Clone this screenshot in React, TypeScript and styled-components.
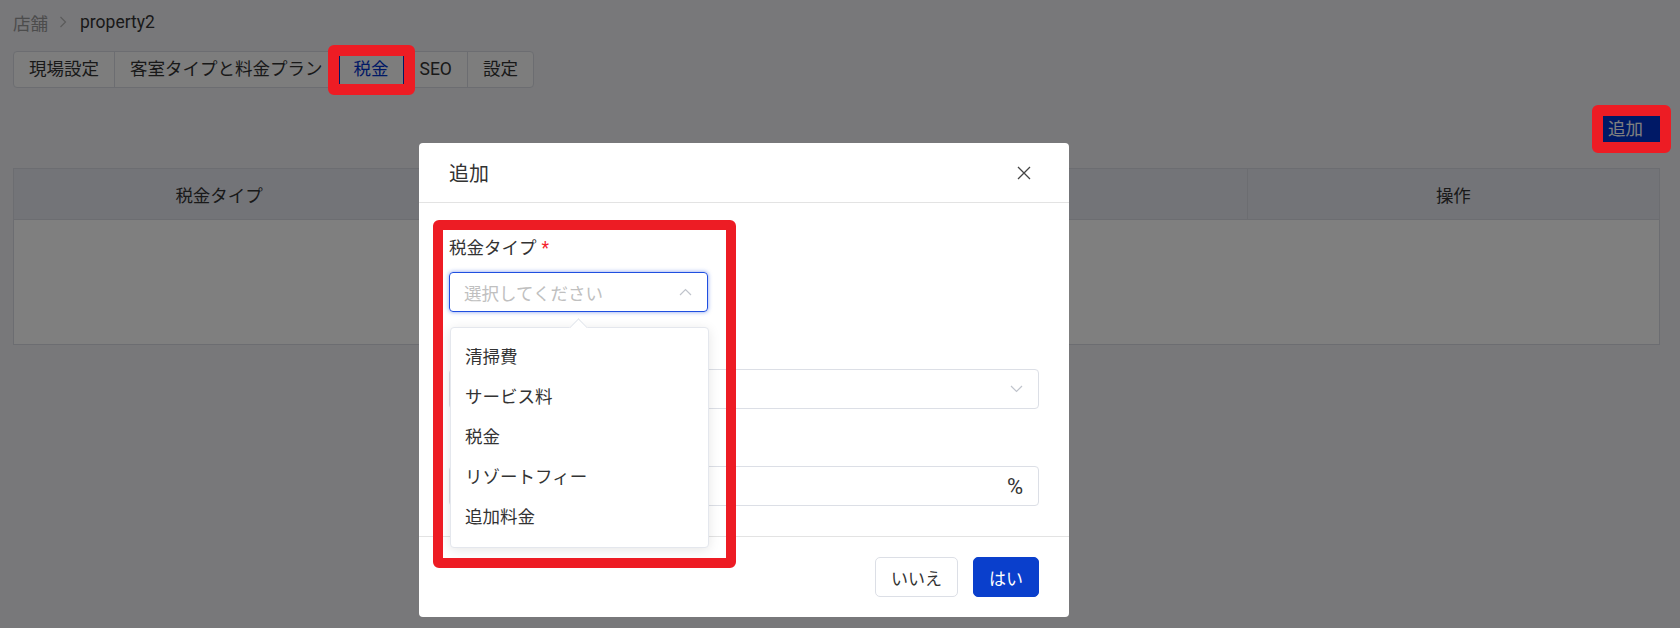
import React from 'react';
import styled, { createGlobalStyle } from 'styled-components';

const GlobalStyle = createGlobalStyle`
  html, body {
    margin: 0;
    padding: 0;
  }
  body {
    width: 1680px;
    height: 628px;
    overflow: hidden;
    background: #f0f0f5;
    font-family: Roboto, "Noto Sans CJK JP", sans-serif;
    font-size: 17.5px;
    color: #333;
  }
`;

const Page = styled.div`
  padding: 10px 20px 0 13px;
`;

const Breadcrumb = styled.div`
  display: flex;
  align-items: center;
  height: 24px;
`;

const Crumb = styled.span<{ $current?: boolean }>`
  color: ${p => (p.$current ? '#333' : '#999')};
`;

const CrumbSep = styled.span`
  display: flex;
  margin: 0 13px 0 11px;
`;

const Tabs = styled.div`
  display: inline-flex;
  margin-top: 17px;
  border: 1px solid #d8dbe2;
  border-radius: 4px;
  background: #fafafa;
`;

const Tab = styled.div<{ $active?: boolean; $last?: boolean }>`
  position: relative;
  padding: 0 15px;
  line-height: 35px;
  border-right: ${p => (p.$last ? 'none' : '1px solid #d8dbe2')};
  color: ${p => (p.$active ? '#0033cc' : '#333')};
  box-shadow: ${p => (p.$active ? 'inset 1px 0 #0033cc, inset -1px 0 #0033cc' : 'none')};
`;

// red annotation frame drawn over the highlighted element
const Mark = styled.div<{ $t: number; $r: number; $b: number; $l: number; $w?: number }>`
  position: absolute;
  top: ${p => p.$t}px;
  right: ${p => p.$r}px;
  bottom: ${p => p.$b}px;
  left: ${p => p.$l}px;
  border: ${p => p.$w ?? 11}px solid #ed1c24;
  border-radius: 6px;
  z-index: 30;
  pointer-events: none;
`;

const FieldMark = styled.div`
  position: absolute;
  top: -16px;
  left: -16px;
  width: 303px;
  height: 348px;
  box-sizing: border-box;
  border: 10px solid #ed1c24;
  border-radius: 6px;
  z-index: 30;
  pointer-events: none;
`;

const Toolbar = styled.div`
  display: flex;
  justify-content: flex-end;
  margin-top: 28px;
`;

const AddWrap = styled.div`
  position: relative;
`;

const AddButton = styled.button`
  width: 57px;
  height: 26px;
  padding: 0 0 0 5px;
  border: none;
  background: #0033cc;
  color: #fff;
  font: inherit;
  text-align: left;
  line-height: 26px;
`;

const Table = styled.div`
  margin-top: 26px;
  border: 1px solid #d8dbe2;
  background: #fff;
`;

const Row = styled.div<{ $head?: boolean }>`
  display: grid;
  grid-template-columns: repeat(4, 1fr);
  height: ${p => (p.$head ? '50px' : '124px')};
  background: ${p => (p.$head ? '#e6e8f1' : '#fff')};
  border-bottom: ${p => (p.$head ? '1px solid #d8dbe2' : 'none')};
`;

const HeadCell = styled.div<{ $last?: boolean }>`
  display: flex;
  align-items: center;
  justify-content: center;
  border-right: ${p => (p.$last ? 'none' : '1px solid #d8dbe2')};
`;

const Overlay = styled.div`
  position: fixed;
  inset: 0;
  background: rgba(0, 0, 0, 0.5);
  z-index: 10;
`;

const Modal = styled.div`
  position: fixed;
  top: 143px;
  left: 419px;
  width: 650px;
  background: #fff;
  border-radius: 4px;
  z-index: 20;
`;

const ModalHeader = styled.div`
  display: flex;
  align-items: center;
  justify-content: space-between;
  height: 59px;
  padding: 0 38px 0 30px;
  border-bottom: 1px solid #e3e3e3;
  font-size: 20px;
  color: #333;
`;

const Close = styled.span`
  display: flex;
`;

const ModalBody = styled.div`
  padding: 33px 30px 30px;
`;

const FormItem = styled.div`
  position: relative;
  & + & {
    margin-top: 21px;
  }
`;

const Label = styled.div`
  height: 24px;
  line-height: 24px;
  margin-bottom: 12px;
  color: #333;
`;

const Required = styled.span`
  margin-left: 5px;
  color: #f5222d;
`;

const Field = styled.div<{ $width?: number; $focus?: boolean }>`
  position: relative;
  box-sizing: border-box;
  display: flex;
  align-items: center;
  justify-content: space-between;
  width: ${p => (p.$width ? `${p.$width}px` : '100%')};
  height: 40px;
  padding: 0 15px 0 14px;
  border: 1px solid ${p => (p.$focus ? '#1f4fe0' : '#dcdfe6')};
  border-radius: 4px;
  box-shadow: ${p => (p.$focus ? '0 0 4px rgba(31, 79, 224, 0.55)' : 'none')};
`;

const Placeholder = styled.span`
  color: #c0c0c0;
`;

const Unit = styled.span`
  margin-left: auto;
  font-size: 22px;
  color: #333;
`;

const Dropdown = styled.div`
  position: absolute;
  top: calc(100% + 16px);
  left: 0;
  width: 259px;
  box-sizing: border-box;
  padding: 9px 0 10px;
  background: #fff;
  border: 1px solid #e4e7ed;
  border-radius: 4px;
  box-shadow: 0 2px 12px rgba(0, 0, 0, 0.1);
  z-index: 5;
`;

const Arrow = styled.div`
  position: absolute;
  top: -7px;
  left: 121px;
  width: 12px;
  height: 12px;
  background: #fff;
  border-top: 1px solid #e4e7ed;
  border-left: 1px solid #e4e7ed;
  transform: rotate(45deg);
`;

const Option = styled.div`
  height: 40px;
  line-height: 40px;
  padding: 0 14px;
  color: #333;
`;

const ModalFooter = styled.div`
  display: flex;
  justify-content: flex-end;
  gap: 15px;
  padding: 20px 30px;
  border-top: 1px solid #e3e3e3;
`;

const Button = styled.button<{ $primary?: boolean }>`
  height: 40px;
  padding: 0 15px;
  border: 1px solid ${p => (p.$primary ? '#0a3fcc' : '#dcdfe6')};
  border-radius: 5px;
  background: ${p => (p.$primary ? '#0a3fcc' : '#fff')};
  color: ${p => (p.$primary ? '#fff' : '#333')};
  font: inherit;
  font-size: 17px;
`;

const Chevron = ({ up }: { up?: boolean }) => (
  <svg width="13" height="8" viewBox="0 0 13 8" fill="none" stroke="#c0c4cc" strokeWidth="1.2">
    {up ? <path d="M1 7 L6.5 1.5 L12 7" /> : <path d="M1 1 L6.5 6.5 L12 1" />}
  </svg>
);

const options = ['清掃費', 'サービス料', '税金', 'リゾートフィー', '追加料金'];
const tabs = ['現場設定', '客室タイプと料金プラン', '税金', 'SEO', '設定'];
const columns = ['税金タイプ', '名前', '税率', '操作'];

export default function App() {
  return (
    <>
      <GlobalStyle />
      <Page>
        <Breadcrumb>
          <Crumb>店舗</Crumb>
          <CrumbSep>
            <svg width="8" height="12" viewBox="0 0 8 12" fill="none" stroke="#b5b5b5" strokeWidth="1.2">
              <path d="M1.5 1 L6.5 6 L1.5 11" />
            </svg>
          </CrumbSep>
          <Crumb $current>property2</Crumb>
        </Breadcrumb>

        <Tabs>
          {tabs.map((t, i) => (
            <Tab key={t} $active={t === '税金'} $last={i === tabs.length - 1}>
              {t}
              {t === '税金' && <Mark $t={-7} $r={-11} $b={-8} $l={-11} />}
            </Tab>
          ))}
        </Tabs>

        <Toolbar>
          <AddWrap>
            <AddButton>追加</AddButton>
            <Mark $t={-11} $r={-11} $b={-11} $l={-11} />
          </AddWrap>
        </Toolbar>

        <Table>
          <Row $head>
            {columns.map((c, i) => (
              <HeadCell key={c} $last={i === columns.length - 1}>{c}</HeadCell>
            ))}
          </Row>
          <Row />
        </Table>
      </Page>

      <Overlay />

      <Modal>
        <ModalHeader>
          <span>追加</span>
          <Close>
            <svg width="14" height="14" viewBox="0 0 14 14" stroke="#444" strokeWidth="1.3">
              <path d="M1 1 L13 13 M13 1 L1 13" />
            </svg>
          </Close>
        </ModalHeader>
        <ModalBody>
          <FormItem>
            <Label>
              税金タイプ<Required>*</Required>
            </Label>
            <Field $width={259} $focus>
              <Placeholder>選択してください</Placeholder>
              <Chevron up />
              <Dropdown>
                <Arrow />
                {options.map(o => (
                  <Option key={o}>{o}</Option>
                ))}
              </Dropdown>
            </Field>
            <FieldMark />
          </FormItem>
          <FormItem>
            <Label />
            <Field>
              <span />
              <Chevron />
            </Field>
          </FormItem>
          <FormItem>
            <Label />
            <Field>
              <Unit>%</Unit>
            </Field>
          </FormItem>
        </ModalBody>
        <ModalFooter>
          <Button>いいえ</Button>
          <Button $primary>はい</Button>
        </ModalFooter>
      </Modal>
    </>
  );
}
